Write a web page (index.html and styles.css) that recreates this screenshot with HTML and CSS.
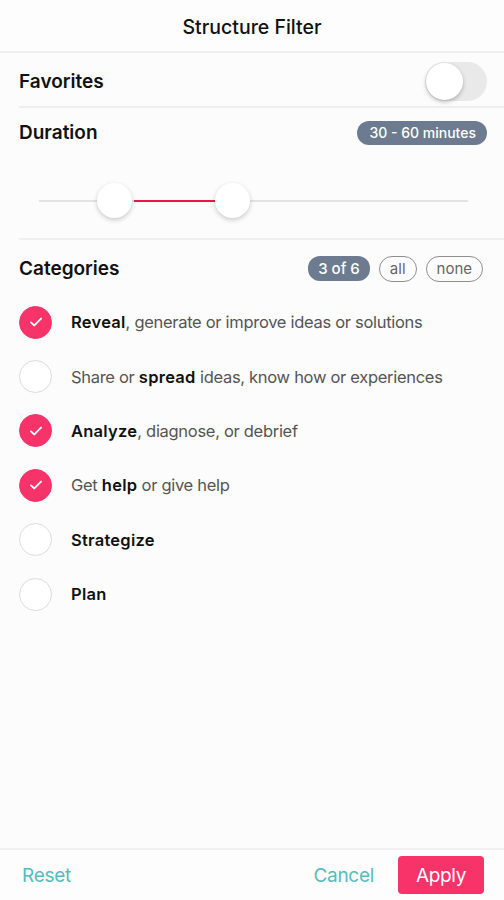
FILE: index.html
```html
<!DOCTYPE html>
<html>
<head>
<meta charset="utf-8">
<link rel="stylesheet" href="styles.css">
</head>
<body>
<div class="screen">
  <header class="header">Structure Filter</header>
  <main class="content">
    <div class="row fav">
      <span class="label">Favorites</span>
      <span class="toggle"><span class="knob"></span></span>
    </div>
    <div class="section duration">
      <div class="row dur-head">
        <span class="label">Duration</span>
        <span class="badge">30 - 60 minutes</span>
      </div>
      <div class="slider">
        <div class="track">
          <div class="range"></div>
          <span class="thumb t1"></span>
          <span class="thumb t2"></span>
        </div>
      </div>
    </div>
    <div class="section cats">
      <div class="row cat-head">
        <span class="label">Categories</span>
        <div class="pills">
          <span class="badge small">3 of 6</span>
          <span class="pill">all</span>
          <span class="pill">none</span>
        </div>
      </div>
      <ul class="list">
        <li class="item"><span class="check on"><svg viewBox="0 0 16 16"><path d="M3.5 8.3l3 2.8 6-6.2"/></svg></span><span class="txt"><b>Reveal</b>, generate or improve ideas or solutions</span></li>
        <li class="item"><span class="check"></span><span class="txt">Share or <b>spread</b> ideas, know how or experiences</span></li>
        <li class="item"><span class="check on"><svg viewBox="0 0 16 16"><path d="M3.5 8.3l3 2.8 6-6.2"/></svg></span><span class="txt"><b>Analyze</b>, diagnose, or debrief</span></li>
        <li class="item"><span class="check on"><svg viewBox="0 0 16 16"><path d="M3.5 8.3l3 2.8 6-6.2"/></svg></span><span class="txt">Get <b>help</b> or give help</span></li>
        <li class="item"><span class="check"></span><span class="txt"><b>Strategize</b></span></li>
        <li class="item"><span class="check"></span><span class="txt"><b>Plan</b></span></li>
      </ul>
    </div>
  </main>
  <footer class="footer">
    <span class="link">Reset</span>
    <div class="actions">
      <span class="link">Cancel</span>
      <span class="apply">Apply</span>
    </div>
  </footer>
</div>
</body>
</html>
```
FILE: styles.css
```css
* { box-sizing: border-box; }
html, body { margin: 0; padding: 0; }
body {
  font-family: Inter, "Noto Sans", "Liberation Sans", sans-serif;
  color: #111;
  background: #fcfcfc;
}
.screen {
  width: 504px;
  height: 900px;
  display: flex;
  flex-direction: column;
  background: #fcfcfc;
}
.header {
  height: 53px;
  display: flex;
  align-items: center;
  justify-content: center;
  font-size: 19.5px;
  font-weight: 500;
  background: #fdfdfd;
  border-bottom: 2px solid #efefef;
  padding-top: 3px;
}
.content {
  flex: 1;
  padding-left: 19px;
}
.row {
  display: flex;
  align-items: center;
  justify-content: space-between;
  padding-right: 17px;
}
.label {
  font-size: 19px;
  font-weight: 600;
}
.fav {
  height: 55px;
  padding-top: 3px;
  border-bottom: 2px solid #eeeeee;
}
.toggle {
  width: 62px;
  height: 39px;
  border-radius: 20px;
  background: #e9e9e9;
  position: relative;
  display: inline-block;
}
.knob {
  position: absolute;
  left: 1px;
  top: 1px;
  width: 37px;
  height: 37px;
  border-radius: 50%;
  background: #fff;
  box-shadow: 0 2px 4px rgba(0,0,0,0.25);
}
.duration {
  border-bottom: 2px solid #efefef;
}
.dur-head {
  height: 49px;
}
.badge {
  background: #6c7b8f;
  color: #fff;
  font-size: 14px;
  font-weight: 500;
  border-radius: 12px;
  height: 24px;
  line-height: 24px;
  padding: 0 11px 0 12px;
}
.badge.small {
  font-size: 15px;
  height: 25px;
  line-height: 25px;
  padding: 0 10px;
}
.slider {
  height: 81px;
  padding: 0 36px 0 20px;
  display: flex;
  align-items: center;
}
.track {
  position: relative;
  width: 100%;
  height: 2px;
  background: #e3e3e3;
  margin-top: 6px;
}
.range {
  position: absolute;
  left: 95px;
  width: 100px;
  top: 0;
  height: 2px;
  background: #e8194a;
}
.thumb {
  position: absolute;
  top: -17px;
  width: 35px;
  height: 35px;
  border-radius: 50%;
  background: #fff;
  box-shadow: 0 2px 5px rgba(0,0,0,0.2);
}
.t1 { left: 58px; }
.t2 { left: 176px; }
.cat-head {
  height: 55px;
  padding-top: 2px;
  padding-right: 21px;
}
.pills {
  display: flex;
  align-items: center;
  gap: 9px;
}
.pill {
  height: 26px;
  line-height: 24px;
  border: 1px solid #8f8f8f;
  border-radius: 13px;
  padding: 0 10px;
  font-size: 15px;
  color: #666;
}
.list {
  list-style: none;
  margin: 0;
  padding: 0;
}
.item {
  height: 54.4px;
  display: flex;
  align-items: center;
  gap: 19px;
}
.check {
  width: 33px;
  height: 33px;
  border-radius: 50%;
  border: 1.5px solid #dcdcdc;
  background: #fff;
  display: flex;
  align-items: center;
  justify-content: center;
  flex: none;
}
.check.on {
  background: #f7336a;
  border-color: #f7336a;
}
.check svg {
  width: 18px;
  height: 18px;
  fill: none;
  stroke: #fff;
  stroke-width: 1.6;
  stroke-linecap: round;
  stroke-linejoin: round;
}
.txt {
  font-size: 16.5px;
  color: #555;
  letter-spacing: -0.3px;
}
.txt b {
  color: #111;
  font-weight: 600;
  letter-spacing: 0.25px;
}
.footer {
  height: 52px;
  border-top: 2px solid #f0f0f0;
  display: flex;
  align-items: center;
  justify-content: space-between;
  padding: 0 20px 0 22px;
  background: #fdfdfd;
}
.link {
  color: #58bcbd;
  font-size: 19px;
  letter-spacing: -0.3px;
}
.actions {
  display: flex;
  align-items: center;
  gap: 24px;
}
.apply {
  background: #f7336a;
  color: #fff;
  font-size: 19px;
  letter-spacing: -0.3px;
  width: 86px;
  height: 38px;
  border-radius: 4px;
  display: flex;
  align-items: center;
  justify-content: center;
}
```
